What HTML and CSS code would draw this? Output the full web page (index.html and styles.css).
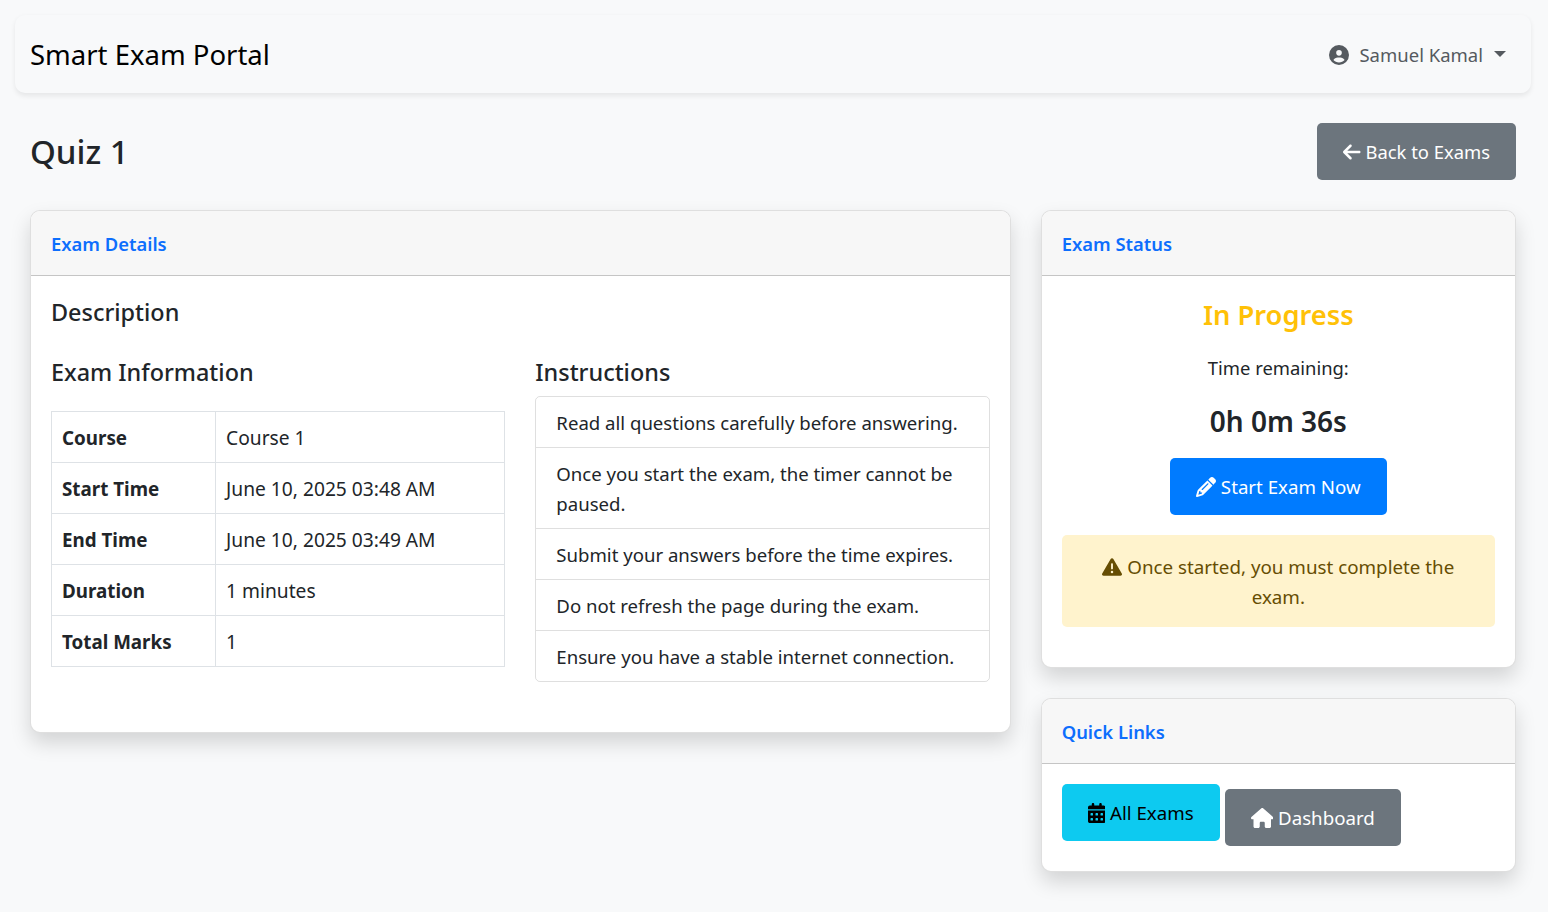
FILE: index.html
```html
<!DOCTYPE html>
<html>
<head>
    <title>Quiz 1 - Smart Exam Portal</title>
    <link rel="stylesheet" href="styles.css">
</head>
<body>
    <nav class="navbar">
        <a class="brand" href="#">Smart Exam Portal</a>
        <a class="user-menu" href="#">
            <svg class="icon" viewBox="0 0 512 512"><path d="M399 384.2C376.9 345.8 335.4 320 288 320H224c-47.4 0-88.9 25.8-111 64.2c35.2 39.2 86.2 63.8 143 63.8s107.8-24.7 143-63.8zM0 256a256 256 0 1 1 512 0A256 256 0 1 1 0 256zm256 16a72 72 0 1 0 0-144 72 72 0 1 0 0 144z"/></svg>
            <span>Samuel Kamal</span>
            <span class="caret"></span>
        </a>
    </nav>

    <main class="page">
        <div class="page-head">
            <h1>Quiz 1</h1>
            <a class="btn btn-secondary" href="#">
                <svg class="icon" viewBox="0 0 448 512"><path d="M9.4 233.4c-12.5 12.5-12.5 32.8 0 45.3l160 160c12.5 12.5 32.8 12.5 45.3 0s12.5-32.8 0-45.3L109.2 288 416 288c17.7 0 32-14.3 32-32s-14.3-32-32-32l-306.7 0L214.6 118.6c12.5-12.5 12.5-32.8 0-45.3s-32.8-12.5-45.3 0l-160 160z"/></svg>
                Back to Exams
            </a>
        </div>

        <div class="layout">
            <section class="card card-details">
                <div class="card-header">Exam Details</div>
                <div class="card-body details-body">
                    <h2 class="heading heading-first">Description</h2>
                    <div class="details-cols">
                        <div>
                            <h2 class="heading">Exam Information</h2>
                            <table class="info-table">
                                <tr><th>Course</th><td>Course 1</td></tr>
                                <tr><th>Start Time</th><td>June 10, 2025 03:48 AM</td></tr>
                                <tr><th>End Time</th><td>June 10, 2025 03:49 AM</td></tr>
                                <tr><th>Duration</th><td>1 minutes</td></tr>
                                <tr><th>Total Marks</th><td>1</td></tr>
                            </table>
                        </div>
                        <div>
                            <h2 class="heading">Instructions</h2>
                            <ul class="list">
                                <li>Read all questions carefully before answering.</li>
                                <li>Once you start the exam, the timer cannot be paused.</li>
                                <li>Submit your answers before the time expires.</li>
                                <li>Do not refresh the page during the exam.</li>
                                <li>Ensure you have a stable internet connection.</li>
                            </ul>
                        </div>
                    </div>
                </div>
            </section>

            <aside class="side">
                <section class="card">
                    <div class="card-header">Exam Status</div>
                    <div class="card-body status-body">
                        <h3 class="status">In Progress</h3>
                        <p class="time-label">Time remaining:</p>
                        <p class="countdown">0h 0m 36s</p>
                        <a class="btn btn-primary" href="#">
                            <svg class="icon" viewBox="0 0 512 512"><path d="M410.3 231l11.3-11.3-33.9-33.9-62.1-62.1L291.7 89.8l-11.3 11.3-22.6 22.6L58.6 322.9c-10.4 10.4-18 23.3-22.2 37.4L1 480.7c-2.5 8.4-.2 17.5 6.1 23.7s15.3 8.5 23.7 6.1l120.3-35.4c14.1-4.2 27-11.8 37.4-22.2L387.7 253.7 410.3 231zM160 399.4l-9.1 22.7c-4 3.1-8.5 5.4-13.3 6.9L59.4 452l23-78.1c1.4-4.9 3.8-9.4 6.9-13.3l22.7-9.1v32c0 8.8 7.2 16 16 16h32zM362.7 18.7L348.3 33.2 325.7 55.8 314.3 67.1l33.9 33.9 62.1 62.1 33.9 33.9 11.3-11.3 22.6-22.6 14.5-14.5c25-25 25-65.5 0-90.5L453.3 18.7c-25-25-65.5-25-90.5 0zm-47.4 168l-144 144c-6.2 6.2-16.4 6.2-22.6 0s-6.2-16.4 0-22.6l144-144c6.2-6.2 16.4-6.2 22.6 0s6.2 16.4 0 22.6z"/></svg>
                            Start Exam Now
                        </a>
                        <div class="alert">
                            <svg class="icon" viewBox="0 0 512 512"><path d="M256 32c14.2 0 27.3 7.5 34.5 19.8l216 368c7.3 12.4 7.3 27.7 .2 40.1S486.3 480 472 480H40c-14.3 0-27.6-7.7-34.7-20.1s-7-27.8 .2-40.1l216-368C228.7 39.5 241.8 32 256 32zm0 128c-13.3 0-24 10.7-24 24V296c0 13.3 10.7 24 24 24s24-10.7 24-24V184c0-13.3-10.7-24-24-24zm32 224a32 32 0 1 0 -64 0 32 32 0 1 0 64 0z"/></svg>
                            Once started, you must complete the exam.
                        </div>
                    </div>
                </section>

                <section class="card">
                    <div class="card-header">Quick Links</div>
                    <div class="card-body links-body">
                        <a class="btn btn-info" href="#">
                            <svg class="icon" viewBox="0 0 448 512"><path d="M128 0c17.7 0 32 14.3 32 32V64H288V32c0-17.7 14.3-32 32-32s32 14.3 32 32V64h48c26.5 0 48 21.5 48 48v48H0V112C0 85.5 21.5 64 48 64H96V32c0-17.7 14.3-32 32-32zM0 192H448V464c0 26.5-21.5 48-48 48H48c-26.5 0-48-21.5-48-48V192zm64 80v32c0 8.8 7.2 16 16 16h32c8.8 0 16-7.2 16-16V272c0-8.8-7.2-16-16-16H80c-8.8 0-16 7.2-16 16zm128 0v32c0 8.8 7.2 16 16 16h32c8.8 0 16-7.2 16-16V272c0-8.8-7.2-16-16-16H208c-8.8 0-16 7.2-16 16zm144-16c-8.8 0-16 7.2-16 16v32c0 8.8 7.2 16 16 16h32c8.8 0 16-7.2 16-16V272c0-8.8-7.2-16-16-16H336zM64 400v32c0 8.8 7.2 16 16 16h32c8.8 0 16-7.2 16-16V400c0-8.8-7.2-16-16-16H80c-8.8 0-16 7.2-16 16zm144-16c-8.8 0-16 7.2-16 16v32c0 8.8 7.2 16 16 16h32c8.8 0 16-7.2 16-16V400c0-8.8-7.2-16-16-16H208zm112 16v32c0 8.8 7.2 16 16 16h32c8.8 0 16-7.2 16-16V400c0-8.8-7.2-16-16-16H336c-8.8 0-16 7.2-16 16z"/></svg>
                            All Exams
                        </a>
                        <a class="btn btn-secondary btn-shifted" href="#">
                            <svg class="icon" viewBox="0 0 576 512"><path d="M575.8 255.5c0 18-15 32.1-32 32.1h-32l.7 160.2c0 2.7-.2 5.4-.5 8.1V472c0 22.1-17.9 40-40 40H456c-1.1 0-2.2 0-3.3-.1c-1.4 .1-2.8 .1-4.2 .1H416 392c-22.1 0-40-17.9-40-40V448 384c0-17.7-14.3-32-32-32H256c-17.7 0-32 14.3-32 32v64 24c0 22.1-17.9 40-40 40H160 128.1c-1.5 0-3-.1-4.5-.2c-1.2 .1-2.4 .2-3.6 .2H104c-22.1 0-40-17.9-40-40V360c0-.9 0-1.9 .1-2.8V287.6H32c-18 0-32-14-32-32.1c0-9 3-17 10-24L266.4 8c7-7 15-8 22-8s15 2 21 7L564.8 231.5c8 7 12 15 11 24z"/></svg>
                            Dashboard
                        </a>
                    </div>
                </section>
            </aside>
        </div>
    </main>
</body>
</html>
```

FILE: styles.css
```css
* {
    box-sizing: border-box;
}

body {
    margin: 0;
    padding: 15px 17px 40px 15px;
    min-height: 912px;
    background-color: #f8f9fa;
    color: #212529;
    font-family: "Noto Sans", "Open Sans", sans-serif;
    font-size: 18.8px;
    line-height: 30px;
}

a {
    text-decoration: none;
}

.icon {
    height: 20px;
    width: auto;
    fill: currentColor;
    vertical-align: -3px;
}

.navbar {
    display: flex;
    justify-content: space-between;
    align-items: center;
    height: 78px;
    padding: 2px 25px 0 15px;
    border-radius: 10px;
    background-color: #f8f9fa;
    box-shadow: 0 2.5px 5px rgba(0, 0, 0, 0.075);
}

.brand {
    color: #000;
    font-size: 27.5px;
}

.user-menu {
    display: flex;
    align-items: center;
    gap: 10px;
    color: #555a5f;
    font-size: 18.5px;
}

.caret {
    width: 0;
    height: 0;
    margin: 0 0 3px 1px;
    border-top: 6px solid #555a5f;
    border-left: 6px solid transparent;
    border-right: 6px solid transparent;
}

.page {
    padding: 30px 15px 0;
}

.page-head {
    display: flex;
    justify-content: space-between;
    align-items: center;
    margin-bottom: 30px;
}

.page-head .btn {
    font-size: 18.4px;
}

h1 {
    margin: 0;
    font-size: 33px;
    font-weight: 500;
    line-height: 42px;
}

.btn {
    display: inline-block;
    padding: 12.5px 25px;
    border: 1px solid transparent;
    border-radius: 5px;
    font-size: 18.7px;
    white-space: nowrap;
}

.btn-secondary {
    background-color: #6c757d;
    color: #fff;
}

.btn-primary {
    background-color: #007bff;
    color: #fff;
}

.btn-info {
    background-color: #0dcaf0;
    color: #000;
}

.layout {
    display: grid;
    grid-template-columns: 980.67fr 475.33fr;
    gap: 30px;
    align-items: start;
}

.side {
    display: flex;
    flex-direction: column;
    gap: 30px;
}

.card {
    border: 1px solid rgba(0, 0, 0, 0.125);
    border-radius: 10px;
    background-color: #fff;
    box-shadow: 0 10px 20px rgba(0, 0, 0, 0.15);
    overflow: hidden;
}

.card-header {
    height: 65px;
    padding: 18px 20px 0;
    border-bottom: 1px solid rgba(0, 0, 0, 0.2);
    background-color: #f7f7f7;
    color: #0d6efd;
    font-size: 18.4px;
    font-weight: 600;
}

.card-body {
    padding: 20px;
}

.details-body {
    padding-bottom: 50px;
}

.heading {
    margin: 0 0 10px;
    font-size: 23.4px;
    font-weight: 500;
}

.heading-first {
    margin-top: 1px;
}

.details-cols {
    display: grid;
    grid-template-columns: 1fr 1fr;
    gap: 30px;
    margin-top: 30px;
}

.info-table {
    width: 100%;
    margin-top: 24px;
    border-collapse: collapse;
}

.info-table th,
.info-table td {
    padding: 11px 10px 9px;
    border: 1px solid #dee2e6;
    text-align: left;
}

.info-table td {
    font-size: 19.2px;
}

.info-table th {
    width: 36.2%;
    font-weight: 700;
}

.list {
    margin: -1px 0 0;
    padding: 0;
    list-style: none;
    border: 1px solid rgba(0, 0, 0, 0.125);
    border-radius: 5px;
    font-size: 18.6px;
}

.list li {
    padding: 11px 20px 9px;
    border-bottom: 1px solid rgba(0, 0, 0, 0.125);
}

.list li:last-child {
    border-bottom: none;
}

.status-body {
    text-align: center;
}

.status {
    margin: 1px 0 20px;
    color: #ffc107;
    font-size: 27.3px;
    font-weight: 600;
    line-height: 36px;
}

.time-label {
    margin: 0 0 20px;
    font-size: 18.4px;
}

.countdown {
    margin: 0 0 19px;
    font-size: 28px;
    font-weight: 600;
    line-height: 36px;
}

.alert {
    margin: 20px 0;
    padding: 17px 20px 15px;
    border-radius: 5px;
    background-color: #fff3cd;
    color: #664d03;
}

.links-body {
    display: flex;
    align-items: flex-start;
    gap: 5px;
    padding-bottom: 25px;
}

.btn-shifted {
    margin-top: 5px;
}
```
